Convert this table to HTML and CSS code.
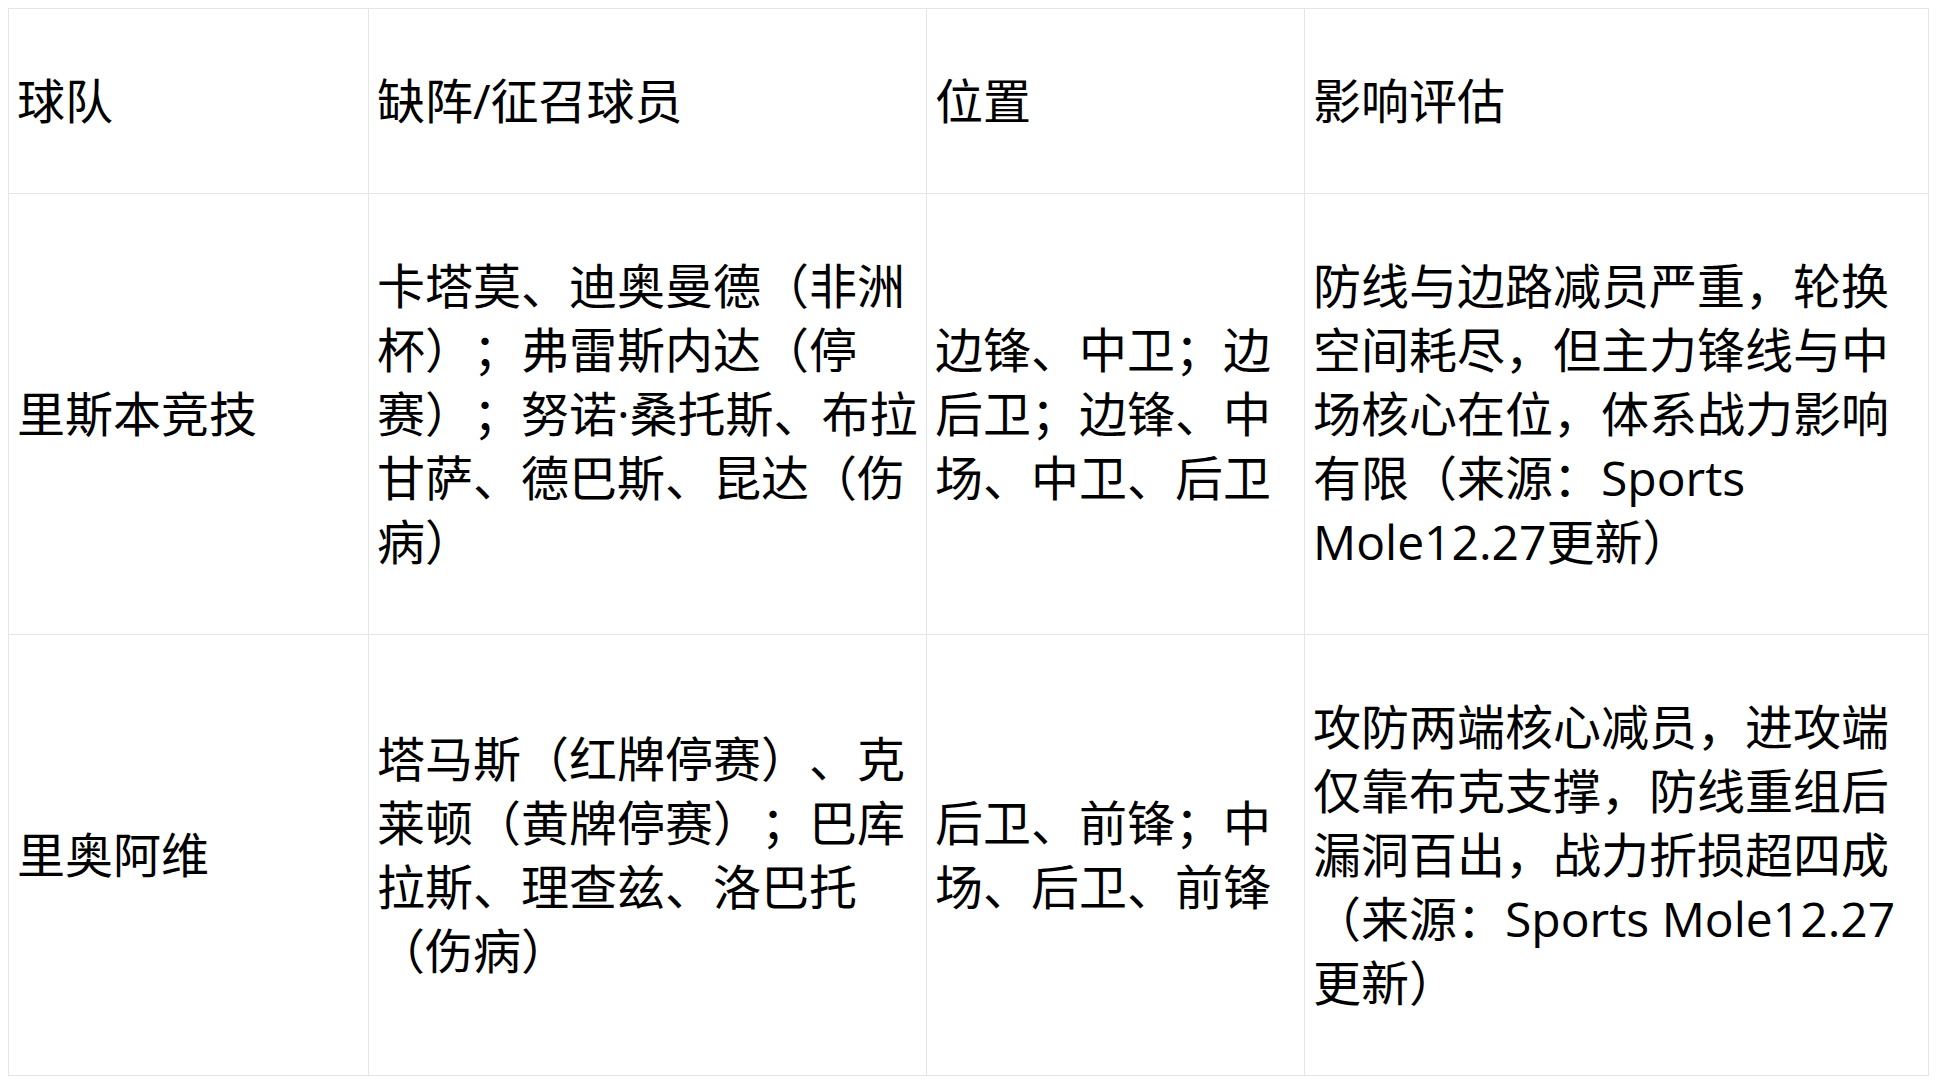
FILE: index.html
```html
<!DOCTYPE html>
<html lang="zh-CN">
<head>
<meta charset="utf-8">
<link rel="stylesheet" href="styles.css">
</head>
<body>
<table class="report">
  <colgroup>
    <col class="c-team">
    <col class="c-players">
    <col class="c-pos">
    <col class="c-impact">
  </colgroup>
  <thead>
    <tr>
      <th>球队</th>
      <th>缺阵/征召球员</th>
      <th>位置</th>
      <th>影响评估</th>
    </tr>
  </thead>
  <tbody>
    <tr>
      <td>里斯本竞技</td>
      <td>卡塔莫、迪奥曼德（非洲杯）；弗雷斯内达（停赛）；努诺·桑托斯、布拉甘萨、德巴斯、昆达（伤病）</td>
      <td>边锋、中卫；边后卫；边锋、中场、中卫、后卫</td>
      <td>防线与边路减员严重，轮换空间耗尽，但主力锋线与中场核心在位，体系战力影响有限（来源：Sports Mole12.27更新）</td>
    </tr>
    <tr>
      <td>里奥阿维</td>
      <td>塔马斯（红牌停赛）、克莱顿（黄牌停赛）；巴库拉斯、理查兹、洛巴托（伤病）</td>
      <td>后卫、前锋；中场、后卫、前锋</td>
      <td>攻防两端核心减员，进攻端仅靠布克支撑，防线重组后漏洞百出，战力折损超四成（来源：Sports Mole12.27更新）</td>
    </tr>
  </tbody>
</table>
</body>
</html>
```
FILE: styles.css
```css
html, body {
  background: #ffffff;
}
body {
  margin: 8px;
  font-family: "Open Sans", "Noto Sans CJK SC", sans-serif;
  color: #000000;
}
.report {
  width: 1921px;
  table-layout: fixed;
  border-collapse: collapse;
  font-size: 48px;
  line-height: 64px;
  text-spacing-trim: space-all;
}
.c-team { width: 360px; }
.c-players { width: 558px; }
.c-pos { width: 378px; }
.c-impact { width: auto; }
.report th,
.report td {
  border: 1px solid #e4e5ea;
  padding: 60px 8px;
  text-align: left;
  vertical-align: middle;
  font-weight: normal;
}
```
